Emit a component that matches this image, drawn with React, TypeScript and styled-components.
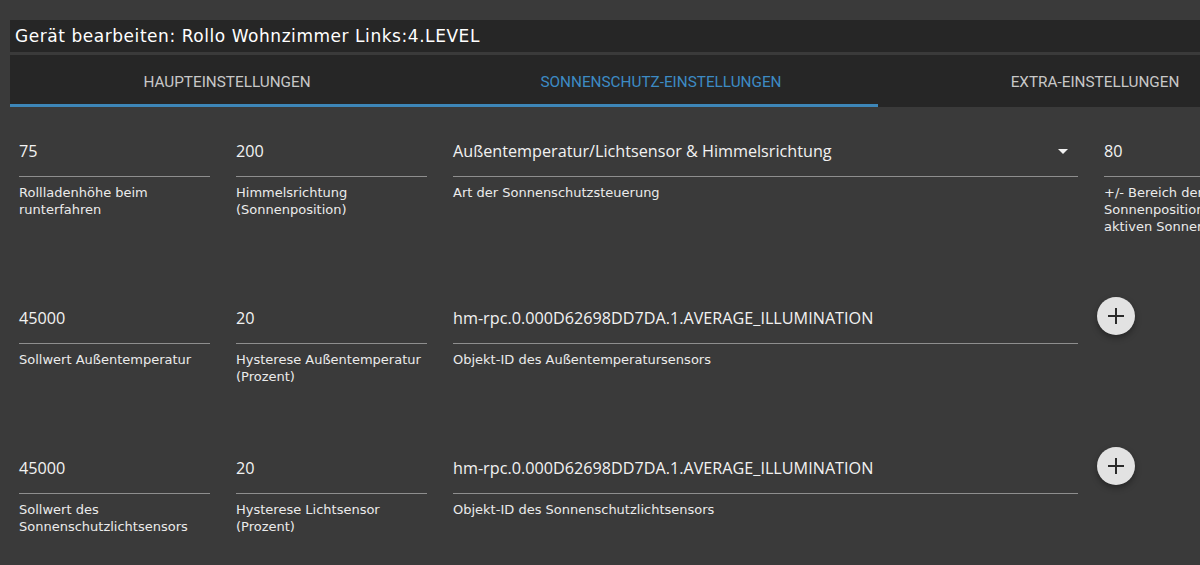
import React from "react";
import styled, { createGlobalStyle } from "styled-components";

const GlobalStyle = createGlobalStyle`
  body {
    margin: 0;
    background: #3a3a3a;
    overflow: hidden;
  }
`;

const Page = styled.div`
  width: 1302px;
  padding: 20px 0 0 10px;
`;

const TitleBar = styled.div`
  height: 32px;
  background: #262626;
  color: #ffffff;
  font-family: "DejaVu Sans", sans-serif;
  font-size: 17px;
  line-height: 33px;
  padding-left: 5px;
  letter-spacing: 0.55px;
`;

const TabBar = styled.div`
  position: relative;
  margin-top: 3px;
  height: 52px;
  background: #262626;
  display: grid;
  grid-template-columns: repeat(3, 434px);
`;

const Tab = styled.div<{ $active?: boolean }>`
  display: flex;
  align-items: center;
  justify-content: center;
  padding-top: 2px;
  font-family: Roboto, sans-serif;
  font-size: 15.3px;
  text-transform: uppercase;
  color: ${(p) => (p.$active ? "#3d8bc4" : "#c8c8c8")};
`;

const Indicator = styled.div`
  position: absolute;
  left: 0;
  bottom: 0;
  width: 868px;
  height: 3px;
  background: #3d86b8;
`;

const Content = styled.div`
  padding: 28px 0 0 9px;
`;

const Row = styled.div`
  display: grid;
  grid-template-columns: 191px 191px 625px 170px;
  column-gap: 26px;
  align-items: start;
  margin-bottom: 67px;
`;

const Field = styled.div`
  display: flex;
  flex-direction: column;
`;

const InputBox = styled.div`
  position: relative;
  height: 41px;
  border-bottom: 1px solid #8e8e8e;
  color: #f2f2f2;
  font-family: "Open Sans", sans-serif;
  font-size: 16.2px;
  line-height: 32px;
  white-space: nowrap;
`;

const Arrow = styled.span`
  position: absolute;
  right: 10px;
  top: 14px;
  width: 0;
  height: 0;
  border-left: 5px solid transparent;
  border-right: 5px solid transparent;
  border-top: 5px solid #f2f2f2;
`;

const Helper = styled.div`
  margin-top: 7px;
  color: #ebebeb;
  font-family: "DejaVu Sans", sans-serif;
  font-size: 13px;
  line-height: 17px;
`;

const AddButton = styled.button`
  width: 38px;
  height: 38px;
  margin: -5px 0 0 -7px;
  border: none;
  border-radius: 50%;
  background: #e2e2e2;
  box-shadow: 0 3px 6px rgba(0, 0, 0, 0.35);
  display: flex;
  align-items: center;
  justify-content: center;
  padding: 0;
`;

type FieldProps = { value: string; label: string; select?: boolean };

function TextField({ value, label, select }: FieldProps) {
  return (
    <Field>
      <InputBox>
        {value}
        {select && <Arrow />}
      </InputBox>
      <Helper>{label}</Helper>
    </Field>
  );
}

function PlusButton() {
  return (
    <AddButton>
      <svg width="18" height="18" viewBox="0 0 18 18">
        <path d="M9 1v16M1 9h16" stroke="#2a2a2a" strokeWidth="2" />
      </svg>
    </AddButton>
  );
}

const oid = "hm-rpc.0.000D62698DD7DA.1.AVERAGE_ILLUMINATION";

export default function App() {
  return (
    <Page>
      <GlobalStyle />
      <TitleBar>Gerät bearbeiten: Rollo Wohnzimmer Links:4.LEVEL</TitleBar>
      <TabBar>
        <Tab>Haupteinstellungen</Tab>
        <Tab $active>Sonnenschutz-Einstellungen</Tab>
        <Tab>Extra-Einstellungen</Tab>
        <Indicator />
      </TabBar>
      <Content>
        <Row>
          <TextField value="75" label="Rollladenhöhe beim runterfahren" />
          <TextField value="200" label="Himmelsrichtung (Sonnenposition)" />
          <TextField
            value="Außentemperatur/Lichtsensor & Himmelsrichtung"
            label="Art der Sonnenschutzsteuerung"
            select
          />
          <TextField
            value="80"
            label="+/- Bereich der Sonnenposition beim aktiven Sonnenschutz"
          />
        </Row>
        <Row>
          <TextField value="45000" label="Sollwert Außentemperatur" />
          <TextField value="20" label="Hysterese Außentemperatur (Prozent)" />
          <TextField value={oid} label="Objekt-ID des Außentemperatursensors" />
          <PlusButton />
        </Row>
        <Row>
          <TextField value="45000" label="Sollwert des Sonnenschutzlichtsensors" />
          <TextField value="20" label="Hysterese Lichtsensor (Prozent)" />
          <TextField value={oid} label="Objekt-ID des Sonnenschutzlichtsensors" />
          <PlusButton />
        </Row>
      </Content>
    </Page>
  );
}
